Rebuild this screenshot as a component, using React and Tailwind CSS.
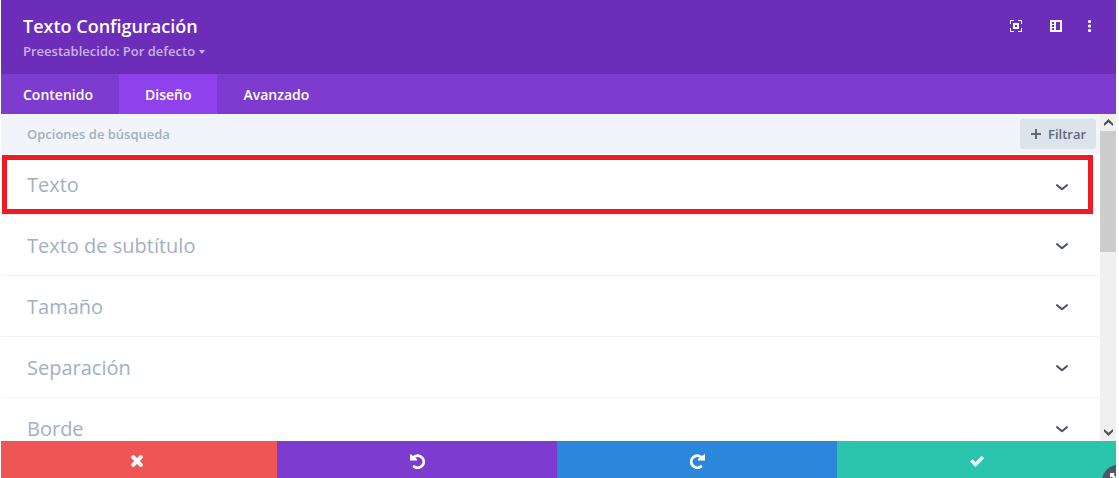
import React, { useState } from 'react';

const TABS = [
    { id: 'contenido', label: 'Contenido', width: 'w-[118px] pl-[22px]' },
    { id: 'diseno', label: 'Diseño', width: 'w-[98px] pl-[26px]' },
    { id: 'avanzado', label: 'Avanzado', width: 'w-[120px] pl-[26.5px]' },
];

const SECTIONS = [
    { label: 'Texto', highlighted: true },
    { label: 'Texto de subtítulo' },
    { label: 'Tamaño' },
    { label: 'Separación' },
    { label: 'Borde' },
];

const ExpandIcon = () => (
    <svg width="12" height="12" viewBox="0 0 12 12" shapeRendering="crispEdges" fill="white">
        <path d="M0 0h4v1H1v3H0zM8 0h4v4h-1V1H8zM0 8h1v3h3v1H0zM11 8h1v4H8v-1h3z" />
        <path fillRule="evenodd" d="M3 3h6v6H3zM5 5v2h2V5z" />
    </svg>
);

const SidebarIcon = () => (
    <svg width="12" height="12" viewBox="0 0 12 12" shapeRendering="crispEdges">
        <path fill="white" fillRule="evenodd" d="M0 0h12v12H0zM2 2v2h2V2zM2 5v2h2V5zM2 8v2h2V8zM6 2v8h4V2z" />
    </svg>
);

const DotsIcon = () => (
    <svg width="4" height="14" viewBox="0 0 4 14" fill="white">
        <circle cx="2.5" cy="2.5" r="1.6" />
        <circle cx="2.5" cy="7" r="1.6" />
        <circle cx="2.5" cy="11.5" r="1.6" />
    </svg>
);

const ChevronIcon = ({ className }) => (
    <svg className={className} width="12" height="7" viewBox="0 0 12 7" fill="none" stroke="#42536b" strokeWidth="2.1" strokeLinecap="round" strokeLinejoin="round">
        <path d="M1.1 1.2L6 5.2 10.9 1.2" />
    </svg>
);

const CloseIcon = () => (
    <svg width="12" height="12" viewBox="0 0 12 12" stroke="white" strokeWidth="4" strokeLinecap="round">
        <path d="M2.2 2.2l7.6 7.6M9.8 2.2L2.2 9.8" />
    </svg>
);

const UndoIcon = ({ className }) => (
    <svg className={className} width="15" height="15" viewBox="0 0 15 15">
        <path d="M4 3A6 6 0 1 1 4.2 12.6" fill="none" stroke="white" strokeWidth="2.8" strokeLinecap="round" />
        <path d="M0 0L2 1.2 7 5V6.6H0z" fill="white" />
    </svg>
);

const CheckIcon = () => (
    <svg width="14" height="12" viewBox="0 0 14 12" fill="none" stroke="white" strokeWidth="3.5">
        <path d="M1.3 5.5l4.2 4L12.8 2" />
    </svg>
);

// Botones inferiores del modal
const FOOTER = [
    { id: 'cerrar', style: 'w-[276px] bg-[#ef5555] pr-1', icon: <CloseIcon /> },
    { id: 'deshacer', style: 'w-[280px] bg-[#7e3bd0]', icon: <UndoIcon /> },
    { id: 'rehacer', style: 'w-[280px] bg-[#2b87da]', icon: <UndoIcon className="-scale-x-100" /> },
    { id: 'guardar', style: 'w-[279px] bg-[#2bc4ad]', icon: <CheckIcon /> },
];

const Header = () => (
    <header className="flex h-[74px] shrink-0 justify-between bg-[#6c2eb9] pl-[22px] pr-[25px]">
        <div className="pt-[14px]">
            <h1 className="text-lg/6 font-semibold text-white">Texto Configuración</h1>
            <div className="flex items-center gap-1 pt-1 text-[13px]/[18px] font-semibold text-[#c9b2e6]">
                <span>Preestablecido: Por defecto</span>
                <svg className="mt-px" width="6" height="4" viewBox="0 0 6 4" fill="currentColor">
                    <path d="M0 0h6L3 4z" />
                </svg>
            </div>
        </div>
        <div className="flex h-[52px] items-center">
            <button className="mr-7"><ExpandIcon /></button>
            <button className="mr-[25px]"><SidebarIcon /></button>
            <button><DotsIcon /></button>
        </div>
    </header>
);

const SectionRow = ({ label, highlighted }) => (
    <div className="relative flex h-[61px] shrink-0 items-center justify-between border-b border-[#f1f3f5] bg-white pl-[26px] pr-8">
        <h3 className="pt-0.5 text-xl text-[#a2b0c1]">{label}</h3>
        <ChevronIcon className={highlighted ? 'mt-[7px]' : 'mt-[3px]'} />
        {highlighted && (
            <div className="absolute left-px top-px h-[59px] w-[1091px] border-[5px] border-[#ed1c24]" />
        )}
    </div>
);

const ScrollArrow = ({ up }) => (
    <div className="flex h-[17px] items-center justify-center">
        <svg className={up ? '' : 'rotate-180'} width="9" height="7" viewBox="0 0 9 7" fill="#505050">
            <path d="M4.5 0L9 4.5V7L4.5 3.2 0 7V4.5z" />
        </svg>
    </div>
);

const App = () => {
    const [activeTab, setActiveTab] = useState('diseno');

    return (
        <div className="h-[478px] w-[1119px] overflow-hidden bg-white pl-px pr-[3px] font-['Open_Sans',sans-serif]">
            <div className="relative flex h-full flex-col overflow-hidden">
                <Header />

                {/* Pestañas */}
                <nav className="flex h-10 shrink-0 bg-[#7e3bd0]">
                    {TABS.map((tab) => (
                        <button
                            key={tab.id}
                            onClick={() => setActiveTab(tab.id)}
                            className={`${tab.width} pt-px text-left text-sm font-semibold text-white ${
                                activeTab === tab.id ? 'bg-[#8f42ec]' : ''
                            }`}
                        >
                            {tab.label}
                        </button>
                    ))}
                </nav>

                <div className="flex h-[327px] shrink-0">
                    <main className="flex flex-1 flex-col overflow-hidden">
                        <div className="flex h-10 shrink-0 items-center justify-between bg-[#f1f4f9] pl-[26px] pr-1 text-[13px] font-semibold">
                            <span className="pt-0.5 text-[#a2b0c1]">Opciones de búsqueda</span>
                            <button className="flex h-[30px] w-[76px] items-center gap-[7px] rounded-[3px] bg-[#dce3eb] pl-[11px] text-[#5c6978]">
                                <svg width="10" height="10" viewBox="0 0 10 10" stroke="currentColor" strokeWidth="2">
                                    <path d="M5 0v10M0 5h10" />
                                </svg>
                                <span className="pt-0.5">Filtrar</span>
                            </button>
                        </div>
                        {SECTIONS.map((section) => (
                            <SectionRow key={section.label} {...section} />
                        ))}
                    </main>

                    {/* Barra de desplazamiento */}
                    <div className="flex w-4 flex-col bg-[#f0f0f0] pl-px">
                        <ScrollArrow up />
                        <div className="-ml-px h-[121px] bg-[#cdcdcd]" />
                        <div className="flex-1" />
                        <ScrollArrow />
                    </div>
                </div>

                <footer className="flex h-[37px] shrink-0">
                    {FOOTER.map((item) => (
                        <button key={item.id} className={`flex items-center justify-center pt-[3px] ${item.style}`}>
                            {item.icon}
                        </button>
                    ))}
                </footer>

                {/* Control de redimensionado */}
                <div className="absolute -bottom-[19px] -right-[18px] size-8 rounded-full bg-[#4c5866]">
                    <svg className="absolute left-2 top-2" width="12" height="12" viewBox="0 0 12 12" fill="white">
                        <path d="M0 0h5L3.5 1.5 6 4 4 6 1.5 3.5 0 5z" />
                    </svg>
                </div>
            </div>
        </div>
    );
};

export default App;
